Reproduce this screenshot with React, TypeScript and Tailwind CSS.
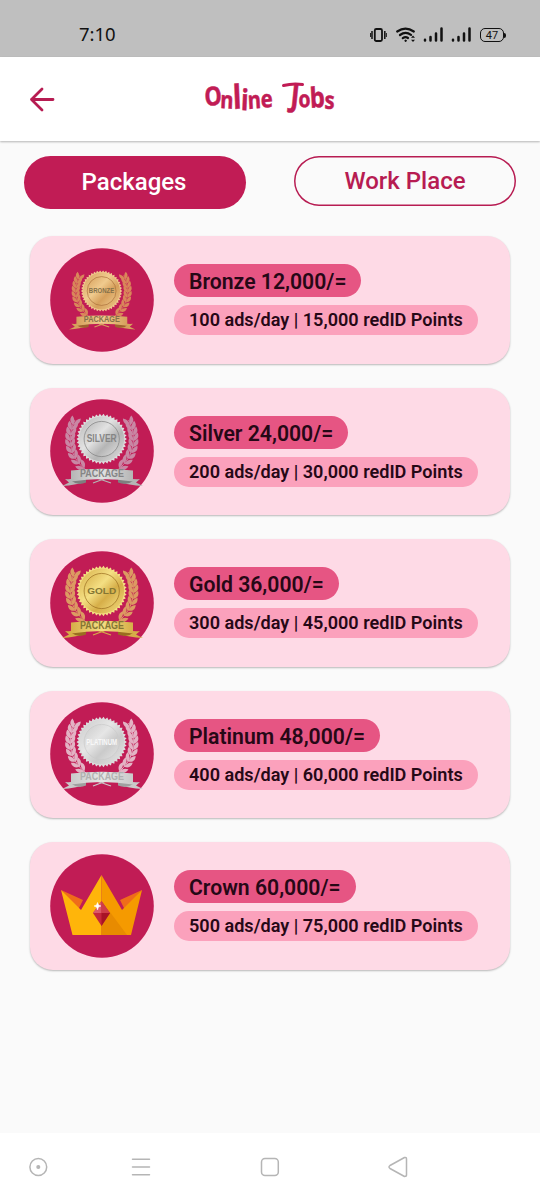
type Metal = { id: string; light: string; mid: string; dark: string; leaf: string; ink: string };

const metals: Record<string, Metal> = {
  BRONZE: { id: "bronze", light: "#f0cb8e", mid: "#d6a05c", dark: "#a0622f", leaf: "#d9875a", ink: "#857049" },
  SILVER: { id: "silver", light: "#e2e2e2", mid: "#b5b5b5", dark: "#7f7f7f", leaf: "#c987a4", ink: "#858585" },
  GOLD: { id: "gold", light: "#f4df83", mid: "#d6ae48", dark: "#9a6d20", leaf: "#dc9a62", ink: "#857634" },
  PLATINUM: { id: "platinum", light: "#e6e6e6", mid: "#cacaca", dark: "#a0a0a0", leaf: "#e3b3c4", ink: "#f8f8f8" },
};

const packages = [
  { title: "Bronze 12,000/=", detail: "100 ads/day | 15,000 redID Points", badge: "BRONZE" },
  { title: "Silver 24,000/=", detail: "200 ads/day | 30,000 redID Points", badge: "SILVER" },
  { title: "Gold 36,000/=", detail: "300 ads/day | 45,000 redID Points", badge: "GOLD" },
  { title: "Platinum 48,000/=", detail: "400 ads/day | 60,000 redID Points", badge: "PLATINUM" },
  { title: "Crown 60,000/=", detail: "500 ads/day | 75,000 redID Points", badge: "CROWN" },
];

const sealPoints = Array.from({ length: 84 }, (_, i) => {
  const r = i % 2 ? 23 : 25.2;
  const a = (i * Math.PI) / 42;
  return `${(51.7 + r * Math.cos(a)).toFixed(2)},${(40 + r * Math.sin(a)).toFixed(2)}`;
}).join(" ");

const leaves = [
  [24.3, 23, -70], [22, 28, -76], [20.6, 33.5, -82], [20, 39, -90], [20.2, 45, -97], [21.5, 51, -106], [24, 57, -118], [27.5, 62.5, -130], [32, 67.5, -142],
];

function Laurel({ color }: { color: string }) {
  return (
    <g fill={color}>
      <path d="M25 21C17 36 18 57 36 71" fill="none" stroke={color} strokeWidth="1" />
      {leaves.map(([x, y, a]) => (
        <g key={y} transform={`translate(${x} ${y}) rotate(${a + 90})`}>
          <path d="M0 3C-5 1.500-5.500-2-4-5.500C-.8-3.500 .3-1 0 3Z" />
          <path d="M0 3C5 1.500 6-2 4.800-5.500C1.500-3.500 .3-1 0 3Z" />
        </g>
      ))}
    </g>
  );
}

function Medal({ name }: { name: string }) {
  const m = metals[name];
  const face = `${m.id}-face`;
  const band = `${m.id}-band`;
  const lettering: Record<string, [number, number]> = { BRONZE: [8, 31], SILVER: [10, 30], GOLD: [9.6, 29], PLATINUM: [8.5, 31] };
  const [size, width] = lettering[name];
  return (
    <g transform={name === "BRONZE" ? "translate(9.2 10.2) scale(.82)" : undefined}>
      <defs>
        <linearGradient id={face} x1="0" y1="0" x2="1" y2="1">
          <stop offset="0" stopColor={m.mid} />
          <stop offset=".4" stopColor={m.light} />
          <stop offset=".65" stopColor={m.mid} />
          <stop offset="1" stopColor={m.light} />
        </linearGradient>
        <linearGradient id={band}>
          <stop offset="0" stopColor={m.mid} />
          <stop offset=".5" stopColor={m.light} />
          <stop offset="1" stopColor={m.mid} />
        </linearGradient>
      </defs>
      <Laurel color={m.leaf} />
      <g transform="translate(103.600 0) scale(-1 1)"><Laurel color={m.leaf} /></g>
      <polygon points={sealPoints} fill={name === "SILVER" || name === "PLATINUM" ? "#dddddd" : m.light} />
      <circle cx="51.7" cy="40" r="22.5" fill={`url(#${face})`} />
      <circle cx="51.7" cy="40" r="17.6" fill={`url(#${face})`} stroke={name === "PLATINUM" ? m.mid : m.dark} strokeWidth=".7" />
      <text x="51.7" y="43" textAnchor="middle" fontSize={size} textLength={width} lengthAdjust="spacingAndGlyphs" fontWeight="700" fontFamily="Liberation Sans, sans-serif" fill={m.ink}>{name}</text>
      <path d="M43 84L55 79.500M61 84L48 79.500" stroke={m.mid} strokeWidth="1.300" />
      <path d="M15 80Q24 81 34 77V83Q26 86 12 87L19 83.500Z" fill={m.mid} />
      <path d="M90 80Q81 81 70 77V83Q78 86 93 87L86 83.500Z" fill={m.mid} />
      <path d="M21.700 82L36 79.500V83.500Q28 87 21.700 82ZM83 82L68 79.500V83.500Q77 87 83 82Z" fill={m.dark} />
      <path d="M21 71.500Q52 68 83 71.500V82.500Q52 77.500 21 82.500Z" fill={`url(#${band})`} />
      <text x="52" y="78" textAnchor="middle" fontSize="10" textLength="44" lengthAdjust="spacingAndGlyphs" fontFamily="Liberation Sans, sans-serif" fontWeight="700" fill={name === "PLATINUM" ? "#b0b0b0" : m.ink}>PACKAGE</text>
    </g>
  );
}

function Crown() {
  return (
    <g>
      <path d="M11 36L33 46L28 56ZM92 36L70 46L75 56Z" fill="#ef6c1a" />
      <path d="M51.500 21L31 56L11 36L22.500 81H51.500Z" fill="#ffb50a" />
      <path d="M51.500 21L72 56L92 36L81 81H51.500Z" fill="#f59a00" />
      <path d="M60 58L77 81H51.500V72Z" fill="#e88b00" />
      <path d="M51.500 47L60 59L51.500 72L43 59Z" fill="#c6273b" />
      <path d="M51.500 47L43 59H51.500Z" fill="#dc5a68" />
      <path d="M51.500 47L60 59H51.500Z" fill="#ce3c48" />
      <path d="M51.500 59H60L51.500 72Z" fill="#a81326" />
      <path d="M47.500 48.500L48.500 51L51 52L48.500 53L47.500 56L46.500 53L44 52L46.500 51Z" fill="#fff" stroke="#fff" strokeWidth=".5" />
    </g>
  );
}

function SignalBars() {
  return (
    <svg width="20" height="16" viewBox="0 0 20 16" stroke="#111" strokeWidth="2.500" strokeLinecap="round">
      <path d="M2 12.700V13.500M7.500 10V13.500M13 6.500V13.500M18.500 1.500V13.500" />
    </svg>
  );
}

function StatusBar() {
  return (
    <header className="flex h-[57px] items-end justify-between bg-[#bfbfbf] pr-[34px] pb-[13px] pl-[79px] text-[#111]">
      <span className="font-['Noto_Sans',sans-serif] text-[18.500px] leading-[20px]">7:10</span>
      <div className="flex items-center pb-px">
        <svg width="17" height="16" viewBox="0 0 17 16" fill="none" stroke="#111" strokeWidth="1.800">
          <rect x="4.800" y="2" width="7.200" height="12" rx="1.500" />
          <path d="M2 4V12M14.800 4V12" strokeWidth="1.500" />
          <path d="M.6 6V10M16.300 6V10" strokeWidth="1" />
        </svg>
        <svg className="ml-[9px]" width="20" height="16" viewBox="0 0 20 16" fill="none" stroke="#111" strokeWidth="2.200" strokeLinecap="round">
          <path d="M1.200 4.500Q9.500-1.200 17.800 4.500M4 8Q9.500 4 15 7.800M6.800 11.200Q9.500 9.300 12 11" />
          <circle cx="9.500" cy="13.800" r=".7" fill="#111" strokeWidth="1" />
          <path d="M15 10.800L17 8.500L19 10.800ZM15 12.800L17 15L19 12.800Z" fill="#111" stroke="none" />
        </svg>
        <div className="ml-[7px]"><SignalBars /></div>
        <div className="ml-[8px]"><SignalBars /></div>
        <div className="ml-[9px] flex h-[14px] w-[24px] items-center justify-center rounded-[5px] border-[1.500px] border-[#111] font-['Roboto',sans-serif] text-[11px] leading-none">47</div>
        <span className="h-[5px] w-[2px] rounded-r bg-[#111]" />
      </div>
    </header>
  );
}

function Title() {
  return (
    <svg className="ml-[145px] overflow-visible" width="140" height="84" viewBox="-4 -20 140 84" fill="#c11c55" stroke="#c11c55" strokeWidth=".5" fontFamily="Noto Sans, sans-serif" fontWeight="700">
      <text transform="scale(.84 1)">
        <tspan x="0" y="29" fontSize="26" rotate="-4">O</tspan>
        <tspan x="17.800" y="31" fontSize="24" rotate="3">n</tspan>
        <tspan x="33.800" y="32" fontSize="33" rotate="-3">l</tspan>
        <tspan x="42.500" y="33" fontSize="29" rotate="3">i</tspan>
        <tspan x="51.500" y="32" fontSize="24" rotate="-4">n</tspan>
        <tspan x="67" y="31" fontSize="24" rotate="-5">e</tspan>
        <tspan> </tspan>
        <tspan x="101" y="29" fontSize="31" rotate="7">J</tspan>
        <tspan x="111.500" y="30.500" fontSize="23" rotate="-3">o</tspan>
        <tspan x="125.500" y="31" fontSize="28" rotate="-4">b</tspan>
        <tspan x="142" y="31.500" fontSize="24" rotate="3">s</tspan>
      </text>
      <path d="M78.500 8.500Q88 6 97.500 7.500" fill="none" strokeWidth="3" strokeLinecap="round" />
    </svg>
  );
}

export default function App() {
  return (
    <div className="flex h-[1200px] w-[540px] flex-col overflow-hidden bg-[#fafafa] font-['Roboto',sans-serif]">
      <StatusBar />
      <div className="flex h-[84px] items-center bg-white pl-[29px] shadow-[0_1px_2px_rgba(0,0,0,0.28)]">
        <svg width="27" height="26" viewBox="0 0 27 26" fill="none" stroke="#b71c52" strokeWidth="2.800" strokeLinecap="round" strokeLinejoin="round">
          <path d="M24 13.500H2.500M13 3L2.500 13.500L13 24" />
        </svg>
        <Title />
      </div>
      <main className="flex flex-1 flex-col px-6 pt-[15px]">
        <div className="flex h-[53px] items-start justify-between text-[24px] leading-[28px] font-medium">
          <button className="h-[53px] w-[222px] rounded-full bg-[#c11c55] pr-[2px] pb-[2px] text-white">Packages</button>
          <button className="h-[50px] w-[222px] rounded-full text-[#b71c52] shadow-[inset_0_0_0_1.500px_#b71c52]">Work Place</button>
        </div>
        <div className="mt-[27px] flex flex-col gap-[24px] px-[6px]">
          {packages.map((p) => (
            <section key={p.title} className="flex h-[127.500px] items-center rounded-[23px] bg-[#fedae6] pl-[20px] shadow-[0_1px_2px_rgba(0,0,0,0.27)]">
              <svg className="shrink-0" width="104" height="104" viewBox="0 0 104 104">
                <circle cx="52" cy="52" r="51.800" fill="#c11c55" />
                {p.badge === "CROWN" ? <Crown /> : <Medal name={p.badge} />}
              </svg>
              <div className="ml-[20px] flex flex-col items-start gap-[8px] font-semibold whitespace-nowrap text-[#260816]">
                <div className="flex h-[33px] items-center rounded-full bg-[#e65583] px-[15px] pt-[2px] text-[21.200px] leading-none">{p.title}</div>
                <div className="flex h-[30px] items-center rounded-full bg-[#fba1bc] px-[15px] text-[18.080px] leading-none">{p.detail}</div>
              </div>
            </section>
          ))}
        </div>
      </main>
      <nav className="flex h-[67px] items-center bg-white pl-[28px] text-[#b5b5b5]">
        <svg width="480" height="24" viewBox="0 0 480 24" fill="none" stroke="currentColor" strokeWidth="1.500" strokeLinecap="round" strokeLinejoin="round">
          <circle cx="10.300" cy="12" r="8.400" />
          <circle cx="10.300" cy="12" r="1.300" fill="currentColor" />
          <path d="M104.500 4.200H121.500M104.500 12H121.500M104.500 19.700H121.500" />
          <rect x="233.500" y="3.500" width="16.800" height="17" rx="3.500" />
          <path d="M376.500 2.500L362 10.500Q360 12 362 13.500L376.500 21.500Q378.500 21.500 378.500 20V4Q378.500 2 376.500 2.500Z" />
        </svg>
      </nav>
    </div>
  );
}
